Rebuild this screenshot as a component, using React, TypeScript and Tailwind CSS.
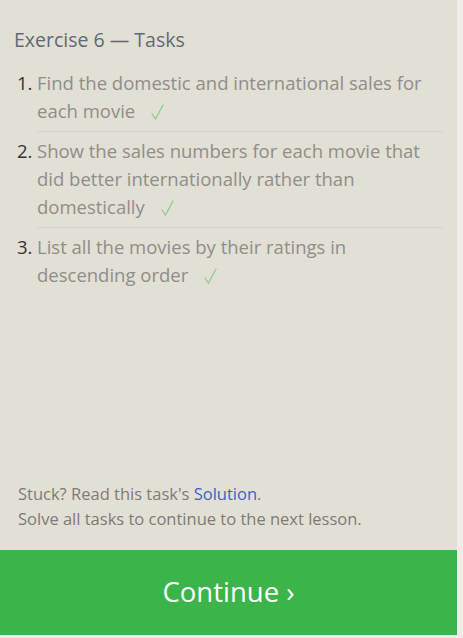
import React from 'react';

const tasks = [
  'Find the domestic and international sales for each movie',
  'Show the sales numbers for each movie that did better internationally rather than domestically',
  'List all the movies by their ratings in descending order',
];

const Check = () => (
  <svg
    width="13"
    height="16"
    viewBox="0 0 13 16"
    className="inline-block ml-[16px] align-[-2px]"
    fill="none"
    stroke="#8fcc92"
    strokeWidth="1.3"
    strokeLinecap="round"
  >
    <polyline points="1,10 4.5,15 12,1" />
  </svg>
);

export default function App() {
  return (
    <div
      className="h-[638px] w-[463px] bg-[#eeede8] overflow-hidden"
      style={{ fontFamily: '"Open Sans", "Noto Sans", sans-serif' }}
    >
      <div className="w-[457px] h-[635px] flex flex-col bg-[#e2dfd5]">
        <div className="flex-1 flex flex-col px-[14px] pt-[27px]">
          <h2 className="text-[19.5px] leading-[26px] text-[#5e6a73]">Exercise 6 — Tasks</h2>

          <ol className="mt-[16px]">
            {tasks.map((task, i) => (
              <li key={i} className="flex">
                <span className="w-[23px] shrink-0 pl-[3px] text-[18.5px] leading-[28px] text-[#333]">{i + 1}.</span>
                <div
                  className={`flex-1 pr-[6px] pb-[6px] mb-[5px] text-[18.5px] leading-[28px] text-[#8f8e89] ${
                    i < tasks.length - 1 ? 'border-b border-[#d3d0c6]' : ''
                  }`}
                >
                  {task}
                  <Check />
                </div>
              </li>
            ))}
          </ol>

          <div className="mt-auto mb-[19px] pl-[4px] text-[16.5px] leading-[25px] text-[#7c7b77]">
            <p>
              Stuck? Read this task's <span className="text-[#3a63c7]">Solution</span>.
            </p>
            <p>Solve all tasks to continue to the next lesson.</p>
          </div>
        </div>

        <button className="h-[85px] w-full bg-[#3bb44a] text-white text-[27.5px] flex items-center justify-center pb-[2px]">
          Continue ›
        </button>
      </div>
    </div>
  );
}
